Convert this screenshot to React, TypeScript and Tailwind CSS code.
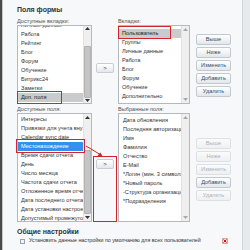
import React from "react";

const tabsLeft = ["Личные данные", "Работа", "Рейтинг", "Блог", "Форум", "Обучение", "Битрикс24", "Заметки", "Доп. поля"];
const tabsRight = ["Пользователь", "Группы", "Личные данные", "Работа", "Блог", "Форум", "Обучение", "Дополнительно"];
const fieldsLeft = [
  "Интересы",
  "Привязки для учета вну",
  "Calendar sync date",
  "Местонахождение",
  "Время сдачи отчета",
  "День",
  "Число месяца",
  "Частота сдачи отчета",
  "Отложенное время отчета",
  "Дата последнего отчета",
  "Дата установки настроек",
  "Допустимый промежуток",
];
const fieldsRight = [
  "Дата обновления",
  "Последняя авторизация",
  "Имя",
  "Фамилия",
  "Отчество",
  "E-Mail",
  "*Логин (мин. 3 символа)",
  "*Новый пароль",
  "-Структура организации",
  "*Подразделения",
];

const Arrow = ({ up, dim }: { up?: boolean; dim?: boolean }) => (
  <div className="h-[7px] flex items-center justify-center">
    <svg width="5" height="3" viewBox="0 0 5 3">
      <path d={up ? "M0 3 L2.5 0 L5 3 Z" : "M0 0 L2.5 3 L5 0 Z"} fill={dim ? "#a8a8a8" : "#333"} />
    </svg>
  </div>
);

const Scrollbar = ({ thumbTop, thumbHeight, dim }: { thumbTop?: number; thumbHeight?: number; dim?: boolean }) => (
  <div className="w-[8px] h-full flex flex-col bg-[#efefef] border-l border-[#e2e2e2]">
    <Arrow up dim={dim} />
    <div className="flex-1 flex flex-col">
      {thumbHeight ? (
        <>
          <div style={{ height: thumbTop }} />
          <div className="w-full rounded-[1px] bg-[#c4c4c4] border border-[#b3b3b3]" style={{ height: thumbHeight }} />
        </>
      ) : null}
    </div>
    <Arrow dim={dim} />
  </div>
);

type ListProps = {
  items: string[];
  width: string;
  height: string;
  offset?: string;
  selected?: number;
  selectedClass?: string;
  box?: string;
  thumbTop?: number;
  thumbHeight?: number;
  dim?: boolean;
};

const ListBox = ({ items, width, height, offset, selected, selectedClass, box, thumbTop, thumbHeight, dim }: ListProps) => (
  <div className={`relative ${width} ${height} bg-white border border-[#b4b9be] flex`}>
    <div className="flex-1 overflow-hidden">
      <div className={`flex flex-col ${offset ?? ""}`}>
        {items.map((it, i) => (
          <div key={it} className={`h-[9px] leading-[9px] text-[5.6px] whitespace-nowrap pl-[3px] ${i === selected ? selectedClass : "text-[#333]"}`}>
            {it}
          </div>
        ))}
      </div>
    </div>
    <Scrollbar thumbTop={thumbTop} thumbHeight={thumbHeight} dim={dim} />
    {box && <div className={`absolute border-[1.5px] border-[#d3232e] ${box}`} />}
  </div>
);

const SideButton = ({ label, disabled }: { label: string; disabled?: boolean }) => (
  <div
    className={`w-[35px] h-[11px] rounded-[2px] border flex items-center justify-center text-[5.6px] leading-none bg-gradient-to-b ${
      disabled ? "border-[#dde1e4] from-[#fbfbfb] to-[#eef0f2] text-[#a9b2ba]" : "border-[#c2c9cf] from-white to-[#e3e7ea] text-[#3d4a57]"
    }`}
  >
    {label}
  </div>
);

const MoveButton = ({ boxed }: { boxed?: boolean }) => (
  <div className={boxed ? "p-[2px] border-[1.5px] border-[#d3232e]" : ""}>
    <div className="w-[18px] h-[10px] rounded-[2px] border border-[#c8ced3] bg-gradient-to-b from-white to-[#e4e8eb] flex items-center justify-center text-[6px] leading-none text-[#333]">
      &gt;
    </div>
  </div>
);

const Label = ({ children }: { children: React.ReactNode }) => (
  <div className="h-[8px] leading-[8px] text-[5.6px] text-[#555] whitespace-nowrap">{children}</div>
);

export default function App() {
  return (
    <div className="relative w-[250px] h-[250px] overflow-hidden flex bg-[#f6f8f9] font-['Liberation_Sans',Arial,sans-serif]">
      <div className="w-[2px] bg-[#4a4a4a]" />
      <div className="w-[1px] bg-[#c9c9c9]" />
      <div className="w-[239px] pl-[14px] pt-[6px] flex flex-col">
        <div className="h-[8px] leading-[8px] text-[7px] font-bold text-[#333]">Поля формы</div>

        <div className="mt-[3px] flex">
          <div className="w-[75px] flex flex-col">
            <Label>Доступные вкладки:</Label>
            <ListBox
              items={tabsLeft}
              width="w-[75px]"
              height="h-[79px]"
              offset="-mt-[5px]"
              selected={8}
              selectedClass="bg-[#cbcbcb] text-[#222]"
              box="left-[-1px] top-[65px] w-[45px] h-[13px]"
              thumbTop={14}
              thumbHeight={52}
            />
          </div>
          <div className="w-[26px] flex justify-center pt-[46px]">
            <MoveButton />
          </div>
          <div className="w-[72px] flex flex-col">
            <Label>Вкладки:</Label>
            <ListBox
              items={tabsRight}
              width="w-[72px]"
              height="h-[79px]"
              offset="pt-[3px]"
              selected={0}
              selectedClass="bg-[#cbcbcb] text-[#222]"
              box="left-[-1px] top-[0px] w-[53px] h-[13px]"
              dim
            />
          </div>
          <div className="ml-[6px] pt-[17px] flex flex-col gap-[2px]">
            <SideButton label="Выше" />
            <SideButton label="Ниже" />
            <SideButton label="Изменить" />
            <SideButton label="Добавить" />
            <SideButton label="Удалить" />
          </div>
        </div>

        <div className="mt-[1px] flex">
          <div className="w-[75px] flex flex-col">
            <Label>Доступные поля:</Label>
            <ListBox
              items={fieldsLeft}
              width="w-[75px]"
              height="h-[109px]"
              offset="pt-[1px]"
              selected={3}
              selectedClass="bg-[#3191ec] text-white"
              box="left-[-2px] top-[25px] w-[69px] h-[14px]"
              thumbTop={29}
              thumbHeight={64}
            />
          </div>
          <div className="w-[26px] flex justify-center pt-[51px]">
            <MoveButton boxed />
          </div>
          <div className="w-[72px] flex flex-col">
            <Label>Выбранные поля:</Label>
            <ListBox items={fieldsRight} width="w-[72px]" height="h-[109px]" offset="pt-[2px] pl-[1px]" dim />
          </div>
          <div className="ml-[6px] pt-[33px] flex flex-col gap-[2px]">
            <SideButton label="Выше" disabled />
            <SideButton label="Ниже" disabled />
            <SideButton label="Изменить" disabled />
            <SideButton label="Добавить" />
            <SideButton label="Удалить" disabled />
          </div>
        </div>

        <div className="mt-[6px] h-[8px] leading-[8px] text-[7px] font-bold text-[#333]">Общие настройки</div>
        <div className="mt-[1px] h-[8px] flex items-center pl-[3px] pr-[14px]">
          <div className="w-[5px] h-[5px] border border-[#9aa3ab] bg-[#f3f3f3]" />
          <div className="ml-[4px] text-[5.3px] leading-none text-[#333] whitespace-nowrap">
            Установить данные настройки по умолчанию для всех пользователей
          </div>
          <div className="ml-auto w-[6px] h-[6px] bg-[#f6d7d7] border border-[#e3a4a4] flex items-center justify-center">
            <svg width="4" height="4" viewBox="0 0 4 4">
              <path d="M0.5 0.5 L3.5 3.5 M3.5 0.5 L0.5 3.5" stroke="#d11" strokeWidth="1" />
            </svg>
          </div>
        </div>
      </div>
      <div className="w-[1px] bg-[#d2d6d9]" />
      <div className="flex-1 bg-[#e7eaec]" />

      <svg className="absolute left-0 top-0 pointer-events-none" width="250" height="250" viewBox="0 0 250 250">
        <line x1="86" y1="146" x2="101" y2="155" stroke="#d3232e" strokeWidth="1" />
        <path d="M103 157 L97.5 155.8 L100.3 152.5 Z" fill="#d3232e" />
      </svg>
    </div>
  );
}
